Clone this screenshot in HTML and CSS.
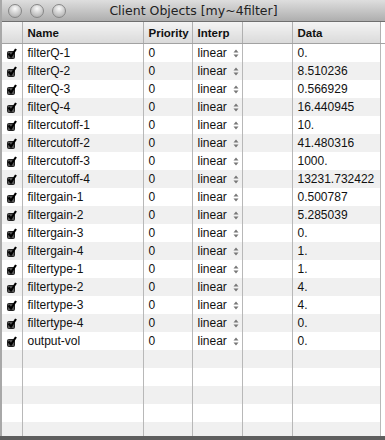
FILE: index.html
```html
<!DOCTYPE html>
<html lang="en">
<head>
  <meta charset="UTF-8" />
  <title>Client Objects</title>
  <link rel="stylesheet" href="styles.css">
</head>
<body>
  <div class="window">
    <div class="titlebar">
      <div class="lights">
        <span class="light"></span>
        <span class="light"></span>
        <span class="light"></span>
      </div>
      <div class="title">Client Objects [my~4filter]</div>
    </div>
    <div class="table-wrap">
      <table class="objects">
        <colgroup>
          <col class="c-check">
          <col class="c-name">
          <col class="c-prio">
          <col class="c-interp">
          <col class="c-blank">
          <col class="c-data">
          <col class="c-end">
        </colgroup>
        <thead>
          <tr>
            <th></th>
            <th>Name</th>
            <th>Priority</th>
            <th>Interp</th>
            <th></th>
            <th>Data</th>
            <th></th>
          </tr>
        </thead>
        <tbody id="rows"></tbody>
      </table>
    </div>
  </div>
  <script>
    const objects = [
      ['filterQ-1', '0.'],
      ['filterQ-2', '8.510236'],
      ['filterQ-3', '0.566929'],
      ['filterQ-4', '16.440945'],
      ['filtercutoff-1', '10.'],
      ['filtercutoff-2', '41.480316'],
      ['filtercutoff-3', '1000.'],
      ['filtercutoff-4', '13231.732422'],
      ['filtergain-1', '0.500787'],
      ['filtergain-2', '5.285039'],
      ['filtergain-3', '0.'],
      ['filtergain-4', '1.'],
      ['filtertype-1', '1.'],
      ['filtertype-2', '4.'],
      ['filtertype-3', '4.'],
      ['filtertype-4', '0.'],
      ['output-vol', '0.']
    ];
    const check = '<svg class="check" width="10" height="11" viewBox="0 0 10 11">' +
      '<rect x="0.5" y="3.5" width="7" height="7" rx="1" fill="#555" stroke="#222"/>' +
      '<path d="M1.5 5.5 L4 8.5 L9 1" fill="none" stroke="#000" stroke-width="2.2"/></svg>';
    const stepper = '<svg class="stepper" width="6" height="9" viewBox="0 0 6 9">' +
      '<path d="M0.5 3.5 L3 0.5 L5.5 3.5 Z M0.5 5.5 L3 8.5 L5.5 5.5 Z" fill="#777"/></svg>';
    const tbody = document.getElementById('rows');
    objects.forEach(([name, data]) => {
      const tr = document.createElement('tr');
      tr.innerHTML = `
        <td class="chk">${check}</td>
        <td>${name}</td>
        <td>0</td>
        <td>linear${stepper}</td>
        <td></td>
        <td>${data}</td>
        <td></td>
      `;
      tbody.appendChild(tr);
    });
    for (let i = 0; i < 5; i++) {
      const tr = document.createElement('tr');
      tr.innerHTML = '<td></td><td></td><td></td><td></td><td></td><td></td><td></td>';
      tbody.appendChild(tr);
    }
  </script>
</body>
</html>
```

FILE: styles.css
```css
body {
  margin: 0;
  background: #5e5e5e;
  font-family: "Liberation Sans", Arial, sans-serif;
}
.window {
  width: 385px;
  height: 436px;
  background: #fff;
  overflow: hidden;
  border-left: 2px solid #a8a8a8;
  box-sizing: border-box;
}
.titlebar {
  height: 22px;
  background: linear-gradient(#dedede, #aeaeae);
  border-bottom: 1px solid #6f6f6f;
  box-sizing: border-box;
  display: flex;
  align-items: center;
}
.lights {
  display: flex;
  gap: 8px;
  padding-left: 6px;
}
.light {
  width: 14px;
  height: 14px;
  border-radius: 50%;
  box-sizing: border-box;
  border: 1px solid #878787;
  background: radial-gradient(circle at 50% 30%, #fbfbfb 0, #d2d2d2 45%, #a4a4a4 100%);
}
.title {
  flex: 1;
  text-align: center;
  font-family: "DejaVu Sans", sans-serif;
  font-size: 12.5px;
  color: #222;
  padding-right: 64px;
}
.table-wrap {
  height: 414px;
  overflow: hidden;
}
.objects {
  border-collapse: collapse;
  table-layout: fixed;
  width: 383px;
  font-size: 12px;
  color: #111;
}
.c-check { width: 20px; }
.c-name { width: 121px; }
.c-prio { width: 49px; }
.c-interp { width: 50px; }
.c-blank { width: 50px; }
.c-data { width: 88px; }
.c-end { width: 5px; }
.objects th {
  height: 21px;
  padding: 0 0 0 5px;
  text-align: left;
  font-weight: bold;
  font-size: 11.5px;
  background: linear-gradient(#f4f4f4, #dadada);
  border-right: 1px solid #b0b0b0;
  border-bottom: 1px solid #a2a2a2;
}
.objects td {
  height: 18px;
  padding: 0 0 0 5px;
  border-right: 1px solid #b8b8b8;
  white-space: nowrap;
  overflow: hidden;
}
.objects th:last-child,
.objects td:last-child {
  border-right: none;
  background: #fff;
}
.objects tbody tr:nth-child(even) td {
  background: #f0f0f0;
}
.objects tbody tr td:last-child {
  background: #fff;
}
.check {
  display: block;
}
.stepper {
  vertical-align: -1px;
  margin-left: 6px;
}
```
